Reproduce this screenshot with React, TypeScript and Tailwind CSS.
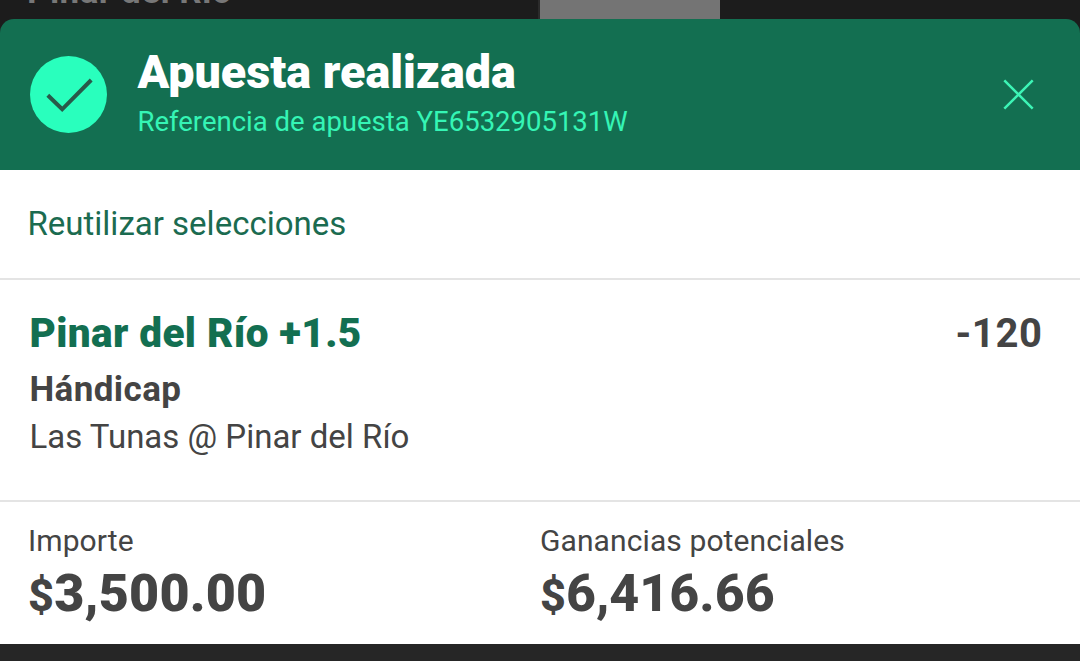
import React from "react";

const totals = [
  { label: "Importe", value: "3,500.00", weight: "font-black tracking-[0.2px]" },
  { label: "Ganancias potenciales", value: "6,416.66", weight: "font-extrabold" },
];

const CheckBadge: React.FC = () => (
  <svg className="w-[77px] h-[77px] shrink-0" viewBox="0 0 77 77" fill="none">
    <circle cx="38.5" cy="38.5" r="38.5" fill="#29ffbd" />
    <path d="M17.8 39.3L32.2 53.3L61.2 24" stroke="#285a4a" strokeWidth="4" />
  </svg>
);

const CloseIcon: React.FC = () => (
  <svg className="w-[31px] h-[31px]" viewBox="0 0 31 31" fill="none">
    <path d="M1.3 1.3L29.7 29.7M29.7 1.3L1.3 29.7" stroke="#3df5b6" strokeWidth="2.5" />
  </svg>
);

export default function App() {
  return (
    <div className="w-[1080px] h-[661px] overflow-hidden flex flex-col bg-[#262626] font-['Roboto',sans-serif] text-[#444444]">
      {/* Page behind the sheet */}
      <div className="h-[19px] shrink-0 bg-[#1c1c1c] flex justify-between">
        <div className="h-full overflow-hidden pl-[27px]">
          <p className="-mt-[28px] text-[35px] leading-[40px] font-bold tracking-[0.4px] text-[#777777]">Pinar del Río</p>
        </div>
        <div className="w-[182px] mr-[360px] shrink-0 border-l-2 border-[#2b2b2b] bg-[#747474]" />
      </div>

      {/* Confirmation header */}
      <div className="h-[151px] shrink-0 bg-[#1c1c1c]">
        <header className="h-full rounded-t-[14px] bg-[#136f51] flex items-center pl-[30px] pr-[46px]">
          <CheckBadge />
          <div className="ml-[30.5px] flex-1 pb-[4px]">
            <h1 className="text-[46.7px] leading-[52px] font-black text-white">Apuesta realizada</h1>
            <p className="mt-[6px] text-[27.5px] leading-[36px] text-[#35f5b5]">
              Referencia de apuesta YE6532905131W
            </p>
          </div>
          <button aria-label="Cerrar">
            <CloseIcon />
          </button>
        </header>
      </div>

      <div className="h-[110px] shrink-0 bg-white border-b-2 border-[#e4e4e4] pl-[27.5px] pt-[34px]">
        <button className="block text-[33px] leading-[40px] text-[#1b6b50]">Reutilizar selecciones</button>
      </div>

      {/* Selection */}
      <section className="h-[222px] shrink-0 bg-white border-b-2 border-[#e4e4e4] pl-[29.5px] pr-[37.5px] pt-[30px]">
        <div className="flex justify-between text-[40px] leading-[48px]">
          <h2 className="text-[40.5px] leading-[46px] font-black tracking-[0.4px] text-[#136f51]">Pinar del Río +1.5</h2>
          <span className="font-bold tracking-[0.6px]">-120</span>
        </div>
        <p className="mt-[10px] text-[35px] leading-[44px] font-bold tracking-[0.4px]">Hándicap</p>
        <p className="mt-[5px] text-[33px] leading-[40px]">Las Tunas @ Pinar del Río</p>
      </section>

      {/* Stake and returns */}
      <section className="h-[142px] shrink-0 bg-white grid grid-cols-[512px_1fr] pl-[28px] pt-[21px]">
        {totals.map((item) => (
          <div key={item.label}>
            <p className="text-[30px] leading-[36px] tracking-[0.1px]">{item.label}</p>
            <p className={`mt-[5px] text-[52px] leading-[60px] ${item.weight}`}>
              <span className="text-[45px] leading-none font-extrabold">$</span>
              {item.value}
            </p>
          </div>
        ))}
      </section>
    </div>
  );
}
